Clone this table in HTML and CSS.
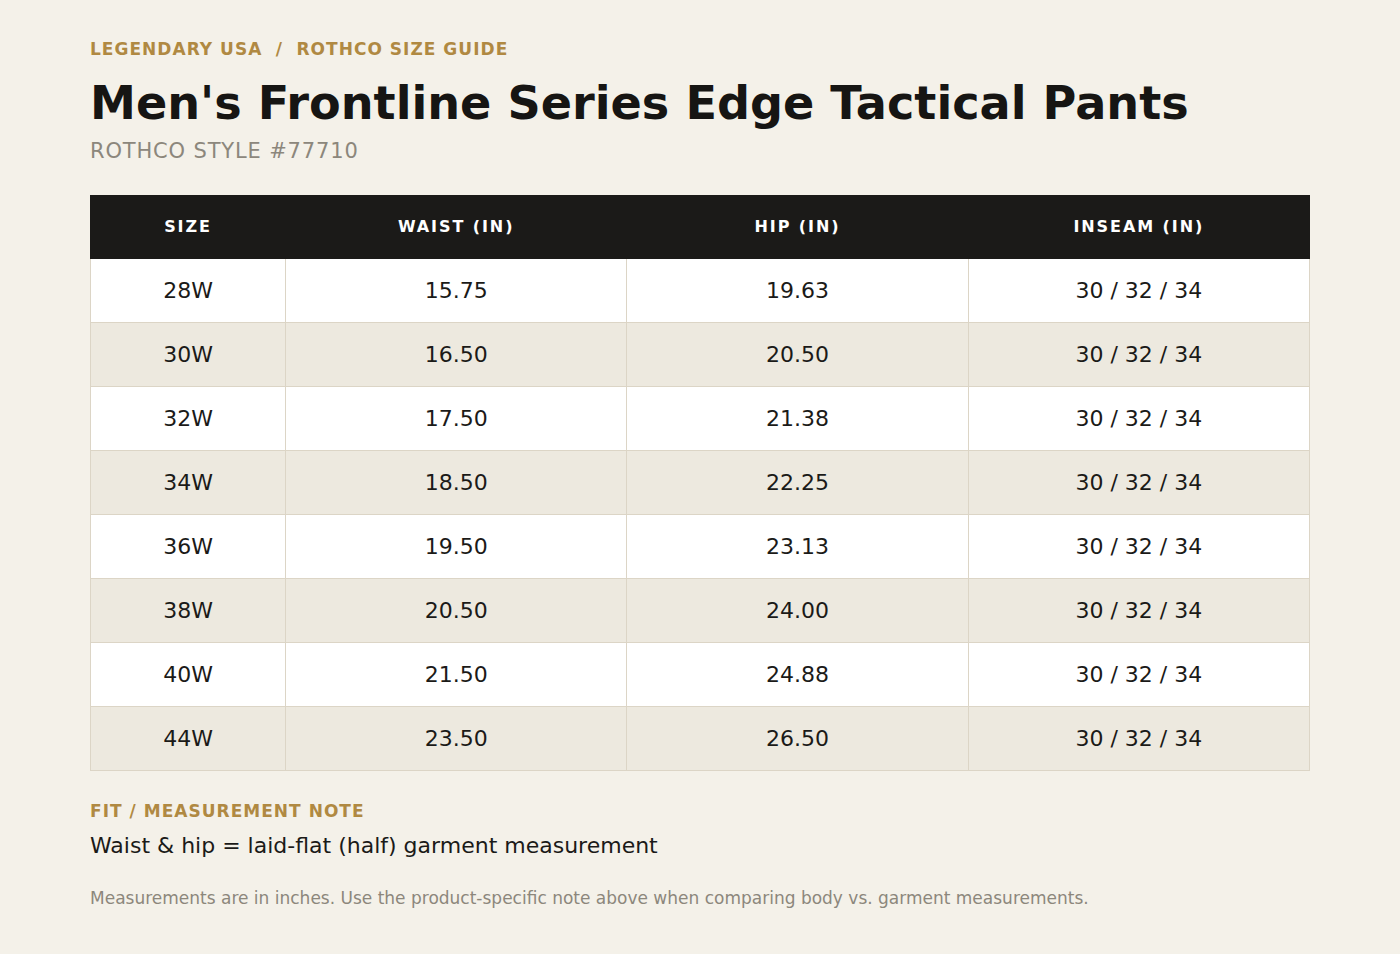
FILE: index.html
```html
<!DOCTYPE html>
<html lang="en">
<head>
<meta charset="utf-8">
<title>Men's Frontline Series Edge Tactical Pants – Rothco Size Guide</title>
<link rel="stylesheet" href="styles.css">
</head>
<body>
<main class="page">
  <header class="head">
    <div class="crumb">LEGENDARY USA <span class="sep">/</span> ROTHCO SIZE GUIDE</div>
    <h1 class="title">Men's Frontline Series Edge Tactical Pants</h1>
    <div class="style-no">ROTHCO STYLE #77710</div>
  </header>

  <table class="sizes">
    <colgroup>
      <col class="c-size">
      <col class="c-val">
      <col class="c-val">
      <col class="c-val">
    </colgroup>
    <thead>
      <tr><th>SIZE</th><th>WAIST (IN)</th><th>HIP (IN)</th><th>INSEAM (IN)</th></tr>
    </thead>
    <tbody>
      <tr><td>28W</td><td>15.75</td><td>19.63</td><td>30 / 32 / 34</td></tr>
      <tr><td>30W</td><td>16.50</td><td>20.50</td><td>30 / 32 / 34</td></tr>
      <tr><td>32W</td><td>17.50</td><td>21.38</td><td>30 / 32 / 34</td></tr>
      <tr><td>34W</td><td>18.50</td><td>22.25</td><td>30 / 32 / 34</td></tr>
      <tr><td>36W</td><td>19.50</td><td>23.13</td><td>30 / 32 / 34</td></tr>
      <tr><td>38W</td><td>20.50</td><td>24.00</td><td>30 / 32 / 34</td></tr>
      <tr><td>40W</td><td>21.50</td><td>24.88</td><td>30 / 32 / 34</td></tr>
      <tr><td>44W</td><td>23.50</td><td>26.50</td><td>30 / 32 / 34</td></tr>
    </tbody>
  </table>

  <section class="note">
    <div class="note-label">FIT / MEASUREMENT NOTE</div>
    <p class="note-text">Waist &amp; hip = laid-flat (half) garment measurement</p>
    <p class="footnote">Measurements are in inches. Use the product-specific note above when comparing body vs. garment measurements.</p>
  </section>
</main>
</body>
</html>
```

FILE: styles.css
```css
html, body {
  margin: 0;
  padding: 0;
  background: #f4f1e9;
}

body {
  font-family: "DejaVu Sans", "Liberation Sans", sans-serif;
  color: #1b1a18;
}

.page {
  padding: 39px 90px 40px;
}

.crumb {
  font-size: 17px;
  font-weight: 700;
  letter-spacing: 0.06em;
  color: #b08942;
  line-height: normal;
}

.crumb .sep {
  margin: 0 6.5px;
}

.title {
  margin: 19px 0 0;
  font-size: 46.15px;
  font-weight: 700;
  line-height: 1.1;
  color: #161513;
}

.style-no {
  margin-top: 10px;
  font-size: 21px;
  letter-spacing: 0.04em;
  color: #8c877c;
  line-height: normal;
}

.sizes {
  margin-top: 32px;
  width: 100%;
  border-collapse: collapse;
  table-layout: fixed;
}

.c-size { width: 16%; }

.sizes th {
  background: #1b1a18;
  color: #ffffff;
  font-size: 16px;
  font-weight: 700;
  letter-spacing: 0.12em;
  height: 62px;
  padding: 0 12px;
  text-align: center;
  border: 1px solid #1b1a18;
}

.sizes td {
  height: 63px;
  padding: 0 12px;
  text-align: center;
  font-size: 22px;
  border: 1px solid #dcd5c6;
  background: #ffffff;
}

.sizes tbody tr:nth-child(even) td {
  background: #ede9df;
}

.note {
  margin-top: 30px;
}

.note-label {
  font-size: 17px;
  font-weight: 700;
  letter-spacing: 0.06em;
  color: #b08942;
  line-height: normal;
}

.note-text {
  margin: 12px 0 0;
  font-size: 22px;
  line-height: normal;
  color: #1b1a18;
}

.footnote {
  margin: 30px 0 0;
  font-size: 17px;
  line-height: normal;
  color: #8c877c;
}
```
